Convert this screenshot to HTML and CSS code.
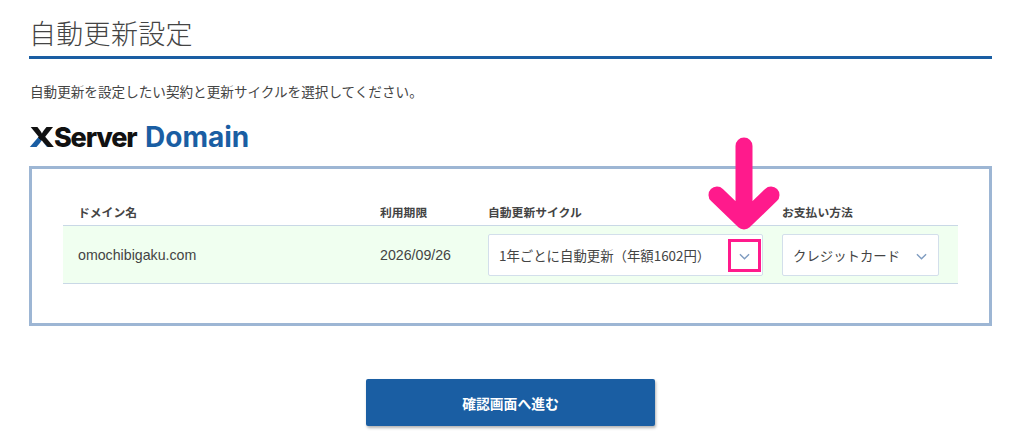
FILE: index.html
```html
<!DOCTYPE html>
<html lang="ja">
<head>
    <meta charset="UTF-8">
    <meta name="viewport" content="width=device-width, initial-scale=1.0">
    <title>自動更新設定</title>
    <link rel="stylesheet" href="styles.css">
</head>
<body>
    <div class="container">
        <h1>自動更新設定</h1>
        <p class="lead">自動更新を設定したい契約と更新サイクルを選択してください。</p>

        <div class="logo"><span class="logo-x">X</span><span class="logo-server">Server</span><span class="logo-domain">Domain</span></div>

        <div class="panel">
            <div class="grid head">
                <div class="cell-name">ドメイン名</div>
                <div>利用期限</div>
                <div>自動更新サイクル</div>
                <div>お支払い方法</div>
            </div>
            <div class="grid row">
                <div class="cell-name">omochibigaku.com</div>
                <div>2026/09/26</div>
                <div class="select select-cycle">
                    <span>1年ごとに自動更新（年額1602円）</span>
                    <svg class="chevron" viewBox="0 0 12 7"><path d="M1 1l5 5 5-5"/></svg>
                    <div class="highlight"></div>
                </div>
                <div class="select select-pay">
                    <span>クレジットカード</span>
                    <svg class="chevron" viewBox="0 0 12 7"><path d="M1 1l5 5 5-5"/></svg>
                </div>
            </div>
        </div>

        <div class="actions">
            <button type="button">確認画面へ進む</button>
        </div>
    </div>

    <svg class="arrow" viewBox="0 0 80 100">
        <path d="M36 9V84M9 58l27 26 27-26"/>
    </svg>
</body>
</html>
```

FILE: styles.css
```css
html, body {
    height: 448px;
    overflow: hidden;
}
body {
    font-family: "Liberation Sans", "Noto Sans CJK JP", sans-serif;
    background-color: #fff;
    color: #444;
    margin: 0;
    position: relative;
}
.container {
    padding: 0 32px 0 29px;
}
h1 {
    font-family: "Noto Sans CJK JP", sans-serif;
    font-size: 27px;
    font-weight: 300;
    line-height: 38px;
    letter-spacing: 0.3px;
    color: #444;
    margin: 0;
    padding-top: 14px;
    padding-bottom: 4px;
    border-bottom: 3px solid #1a5ea3;
}
.lead {
    font-family: "Noto Sans CJK JP", sans-serif;
    font-size: 13.6px;
    line-height: 18px;
    margin: 23px 0 0 1px;
}
.logo {
    display: flex;
    align-items: baseline;
    font-family: Inter, "Liberation Sans", sans-serif;
    font-size: 27px;
    font-weight: 800;
    line-height: 30px;
    color: #111;
    margin: 22px 0 13px 0;
}
.logo-x {
    width: 25px;
    transform: scaleX(1.25);
    transform-origin: left center;
    background: linear-gradient(to top right, #1a5ea3 40%, #111 41%);
    -webkit-background-clip: text;
    background-clip: text;
    color: transparent;
}
.logo-server {
    letter-spacing: -1.2px;
    width: 91px;
}
.logo-domain {
    font-size: 28px;
    font-weight: 700;
    color: #1a5ea3;
}
.panel {
    border: 3px solid #9db6d4;
    padding: 35px 31px 38px 31px;
    height: 160px;
    box-sizing: border-box;
}
.grid {
    display: grid;
    grid-template-columns: 317px 108px 294px 1fr;
    align-items: center;
}
.head {
    font-family: "Noto Sans CJK JP", sans-serif;
    font-size: 11.8px;
    font-weight: 700;
    line-height: 16px;
    padding-bottom: 5px;
    border-bottom: 1px solid #c9d8e6;
}
.cell-name {
    padding-left: 15px;
}
.row {
    height: 58px;
    font-size: 14.2px;
    background: #f0fff0;
    border-bottom: 1px solid #c9d8e6;
    box-sizing: border-box;
}
.select {
    position: relative;
    display: flex;
    justify-content: space-between;
    align-items: center;
    height: 42px;
    box-sizing: border-box;
    background: #fff;
    border: 1px solid #d3dfeb;
    border-radius: 2px;
    font-family: "Noto Sans CJK JP", sans-serif;
    font-size: 13.4px;
}
.select-cycle {
    width: 275px;
    padding: 0 12px 0 10px;
}
.select-pay {
    width: 157px;
    padding: 0 11px 0 10px;
}
.chevron {
    width: 11px;
    height: 7px;
    margin-top: 3px;
    fill: none;
    stroke: #7f9cc0;
    stroke-width: 1.5;
}
.highlight {
    position: absolute;
    right: 1px;
    top: 4px;
    width: 33px;
    height: 33px;
    box-sizing: border-box;
    border: 3px solid #ff1a8c;
}
.actions {
    display: flex;
    justify-content: center;
    padding-top: 53px;
}
button {
    width: 289px;
    height: 47px;
    background: #1a5ea3;
    color: #fff;
    border: none;
    border-radius: 2px;
    box-shadow: 1px 2px 3px rgba(0, 0, 0, 0.3);
    font-family: "Noto Sans CJK JP", sans-serif;
    font-size: 13.8px;
    font-weight: 700;
}
.arrow {
    position: absolute;
    left: 708px;
    top: 137px;
    width: 80px;
    height: 100px;
    fill: none;
    stroke: #ff1a8c;
    stroke-width: 17;
    stroke-linecap: round;
    stroke-linejoin: round;
}
```
